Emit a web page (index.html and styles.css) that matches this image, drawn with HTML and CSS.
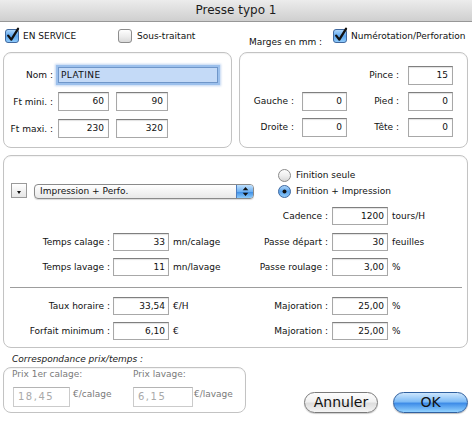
FILE: index.html
```html
<!DOCTYPE html>
<html lang="fr">
<head>
<meta charset="utf-8">
<title>Presse typo 1</title>
<link rel="stylesheet" href="styles.css">
</head>
<body>
<div class="window">
  <div class="titlebar">Presse typo 1</div>
  <div class="content">
    <div class="checks">
      <div class="check c1">
        <svg class="cb" width="15" height="15" viewBox="0 0 15 15"><defs><linearGradient id="gb1" x1="0" y1="0" x2="0" y2="1"><stop offset="0" stop-color="#b4dafc"/><stop offset=".5" stop-color="#5da6ee"/><stop offset="1" stop-color="#92cdfc"/></linearGradient></defs><rect x="0.5" y="1.5" width="13" height="13" rx="2.5" fill="url(#gb1)" stroke="#41699f"/><path d="M3.2 7.6 L6.3 11.6 L13 0.8" fill="none" stroke="#111" stroke-width="2.3" stroke-linecap="round" stroke-linejoin="round"/></svg>
        <span>EN SERVICE</span>
      </div>
      <div class="check c2">
        <svg class="cb" width="15" height="15" viewBox="0 0 15 15"><defs><linearGradient id="gw1" x1="0" y1="0" x2="0" y2="1"><stop offset="0" stop-color="#ffffff"/><stop offset=".55" stop-color="#ececec"/><stop offset="1" stop-color="#d8d8d8"/></linearGradient></defs><rect x="0.5" y="1.5" width="13" height="13" rx="2.5" fill="url(#gw1)" stroke="#8d8d8d"/></svg>
        <span>Sous-traitant</span>
      </div>
      <div class="check c3">
        <svg class="cb" width="15" height="15" viewBox="0 0 15 15"><defs><linearGradient id="gb2" x1="0" y1="0" x2="0" y2="1"><stop offset="0" stop-color="#b4dafc"/><stop offset=".5" stop-color="#5da6ee"/><stop offset="1" stop-color="#92cdfc"/></linearGradient></defs><rect x="0.5" y="1.5" width="13" height="13" rx="2.5" fill="url(#gb2)" stroke="#41699f"/><path d="M3.2 7.6 L6.3 11.6 L13 0.8" fill="none" stroke="#111" stroke-width="2.3" stroke-linecap="round" stroke-linejoin="round"/></svg>
        <span>Numérotation/Perforation</span>
      </div>
    </div>
    <div class="marges">Marges en mm :</div>

    <div class="top">
      <div class="box box-nom">
        <div class="row r1"><span class="lbl">Nom :</span><span class="field name">PLATINE</span></div>
        <div class="row r2"><span class="lbl">Ft mini. :</span><span class="field w51">60</span><span class="field w52">90</span></div>
        <div class="row r3"><span class="lbl">Ft maxi. :</span><span class="field w51">230</span><span class="field w52">320</span></div>
      </div>
      <div class="box box-marges">
        <span class="ml pince-l">Pince :</span><span class="field mf">15</span>
        <span class="ml">Gauche :</span><span class="field mf">0</span>
        <span class="ml">Pied :</span><span class="field mf">0</span>
        <span class="ml">Droite :</span><span class="field mf">0</span>
        <span class="ml">Tête :</span><span class="field mf">0</span>
      </div>
    </div>

    <div class="box box-main">
      <div class="mode">
        <div class="radio rad1">
          <svg width="13" height="13" viewBox="0 0 13 13"><defs><linearGradient id="rw" x1="0" y1="0" x2="0" y2="1"><stop offset="0" stop-color="#ffffff"/><stop offset=".55" stop-color="#ededed"/><stop offset="1" stop-color="#d5d5d5"/></linearGradient></defs><circle cx="6.5" cy="6.5" r="6" fill="url(#rw)" stroke="#8b8b8b"/></svg>
          <span>Finition seule</span>
        </div>
        <div class="selectors">
          <span class="mini"><span class="tri"></span></span>
          <span class="popup"><span class="popup-text">Impression + Perfo.</span><span class="stepper"><svg width="7" height="11" viewBox="0 0 7 11"><path d="M3.5 1 L6.3 4.3 L0.7 4.3 Z M3.5 10 L6.3 6.7 L0.7 6.7 Z" fill="#111"/></svg></span></span>
        </div>
        <div class="radio rad2">
          <svg width="13" height="13" viewBox="0 0 13 13"><defs><linearGradient id="rb" x1="0" y1="0" x2="0" y2="1"><stop offset="0" stop-color="#b6dbfc"/><stop offset=".5" stop-color="#5aa3ec"/><stop offset="1" stop-color="#95cffc"/></linearGradient></defs><circle cx="6.5" cy="6.5" r="6" fill="url(#rb)" stroke="#41699f"/><circle cx="6.5" cy="6.5" r="2" fill="#111"/></svg>
          <span>Finition + Impression</span>
        </div>
      </div>

      <div class="fields">
        <span class="l start4">Cadence :</span><span class="field f">1200</span><span class="u">tours/H</span>

        <span class="l">Temps calage :</span><span class="field f">33</span><span class="u">mn/calage</span>
        <span class="l">Passe départ :</span><span class="field f">30</span><span class="u">feuilles</span>

        <span class="l">Temps lavage :</span><span class="field f">11</span><span class="u">mn/lavage</span>
        <span class="l">Passe roulage :</span><span class="field f">3,00</span><span class="u">%</span>

        <span class="sep"></span>

        <span class="l">Taux horaire :</span><span class="field f">33,54</span><span class="u">€/H</span>
        <span class="l">Majoration :</span><span class="field f">25,00</span><span class="u">%</span>

        <span class="l">Forfait minimum :</span><span class="field f">6,10</span><span class="u">€</span>
        <span class="l">Majoration :</span><span class="field f">25,00</span><span class="u">%</span>
      </div>
    </div>

    <div class="bottom">
      <div class="corr">
        <div class="corr-title">Correspondance prix/temps :</div>
        <div class="box box-corr">
          <span class="cl">Prix 1er calage:</span>
          <span class="cl">Prix lavage:</span>
          <div class="grp g1"><span class="dis d1">18,45</span><span class="cu">€/calage</span></div>
          <div class="grp g2"><span class="dis d2">6,15</span><span class="cu">€/lavage</span></div>
        </div>
      </div>
      <div class="buttons">
        <span class="btn cancel">Annuler</span>
        <span class="btn ok">OK</span>
      </div>
    </div>
  </div>
</div>
</body>
</html>
```

FILE: styles.css
```css
* { box-sizing: border-box; margin: 0; padding: 0; }
html, body { width: 472px; height: 424px; overflow: hidden; }
body {
  background: #ffffff;
  font-family: "DejaVu Sans", "Noto Sans", sans-serif;
  font-size: 9px;
  color: #111;
}
span { white-space: nowrap; }

.titlebar {
  height: 22px;
  line-height: 21px;
  text-align: center;
  font-size: 12px;
  color: #1c1c1c;
  background: linear-gradient(#ececec, #cfcfcf);
  border-bottom: 1px solid #979797;
}

.content { padding: 0 4px 0 3px; }

/* top checkboxes */
.checks { display: flex; height: 15px; margin-top: 6px; }
.check { display: flex; align-items: center; gap: 3px; }
.check svg { overflow: visible; flex: none; }
.c1 { width: 115px; padding-left: 2px; }
.c2 { width: 215px; gap: 4px; }

.marges { margin-top: -6px; height: 11px; line-height: 11px; padding-left: 246px; }

/* boxes */
.box {
  border: 1px solid #c3c3c3;
  border-radius: 8px;
  background: #fff;
  box-shadow: inset 0 1px 1px rgba(0,0,0,0.05);
}
.top { display: flex; gap: 7px; margin-top: 4px; }

.field {
  display: block;
  height: 19px;
  border: 1px solid #a8a8a8;
  border-top-color: #7f7f7f;
  background: #fff;
  text-align: right;
  padding-right: 4px;
  line-height: 17px;
  box-shadow: inset 0 1px 1px rgba(0,0,0,0.12);
}

.box-nom { width: 229px; padding: 12px 0 9px 0; display: flex; flex-direction: column; }
.row { display: flex; align-items: center; }
.r1 { height: 20px; }
.r2 { height: 19px; margin-top: 7px; }
.r3 { height: 19px; margin-top: 8px; }
.lbl { width: 49px; text-align: right; margin-right: 5px; }
.name {
  width: 160px;
  height: 16px;
  line-height: 14px;
  text-align: left;
  padding-left: 2px;
  letter-spacing: 0.4px;
  background: #c4daf7;
  border-color: #6f96c9;
  box-shadow: 0 0 0 2px #9cc0ec, 0 0 2px 3px rgba(120,165,225,0.45);
}
.w51 { width: 51px; }
.w52 { width: 52px; margin-left: 7px; }

.box-marges {
  width: 229px;
  display: grid;
  grid-template-columns: 54px 53px 52px 54px;
  grid-template-rows: 20px 19px 19px;
  row-gap: 7px;
  padding: 12px 0 9px 0;
  align-items: center;
}
.box-marges .r2 { margin: 0; }
.ml { text-align: right; line-height: 19px; }
.pince-l { grid-column-start: 3; }
.mf { width: 45px; justify-self: end; }

/* main box */
.box-main { margin-top: 7px; padding-bottom: 7px; }
.mode {
  display: grid;
  grid-template-columns: 274px 1fr;
  grid-template-rows: 16px 16px;
  padding-top: 11px;
}
.rad1 { grid-column: 2; grid-row: 1; }
.rad2 { grid-column: 2; grid-row: 2; }
.selectors { grid-column: 1; grid-row: 2; display: flex; align-items: center; gap: 7px; padding-left: 7px; }
.radio { display: flex; align-items: center; gap: 5px; }
.radio svg { flex: none; }

.mini {
  width: 16px; height: 15px;
  border: 1px solid #9a9a9a;
  background: linear-gradient(#ffffff, #e6e6e6);
  display: flex; align-items: flex-end; justify-content: center;
  padding-bottom: 3px;
  margin-top: -1px;
}
.tri {
  width: 0; height: 0;
  border-left: 2.5px solid transparent;
  border-right: 2.5px solid transparent;
  border-top: 3px solid #111;
}
.popup {
  width: 220px; height: 15px;
  border: 1px solid #8a8a8a;
  border-radius: 4px;
  background: linear-gradient(#ffffff, #e9e9e9);
  display: flex; align-items: stretch; justify-content: space-between;
  padding-left: 5px;
  overflow: hidden;
  box-shadow: 0 1px 1px rgba(0,0,0,0.15);
}
.popup-text { line-height: 13px; }
.stepper {
  width: 17px;
  background: linear-gradient(#bfe0fd 0%, #6fb1f2 50%, #3f8fe6 55%, #8ccbfb 100%);
  border-left: 1px solid #4d7dbf;
  display: flex; align-items: center; justify-content: center;
}

.fields {
  display: grid;
  grid-template-columns: 106px 59px 61px 98px 60px 1fr;
  grid-template-rows: 26px 25px 18px 21px 25px 18px;
  align-items: start;
  margin-top: 8px;
}
.l { text-align: right; line-height: 18px; }
.start4 { grid-column-start: 4; }
.f { width: 56px; height: 18px; line-height: 16px; justify-self: end; padding-right: 3px; }
.u { line-height: 18px; padding-left: 4px; }
.sep { grid-column: 1 / -1; margin: 11px 5px 0 6px; border-top: 1px solid #9d9d9d; height: 1px; border-bottom: 0; }

/* bottom */
.bottom { display: flex; justify-content: space-between; align-items: flex-end; margin-top: 6px; }
.corr { width: 243px; }
.corr-title { font-style: italic; line-height: 11px; padding-left: 9px; margin-bottom: 2px; color: #222; }
.box-corr {
  display: grid;
  grid-template-columns: 121px 1fr;
  grid-template-rows: 11px 27px;
  padding: 1px 0 5px 8px;
}
.cl { line-height: 11px; color: #7a7a7a; }
.grp { display: flex; align-items: flex-start; margin-top: 7px; }
.dis {
  height: 20px;
  border: 1px solid #cbcbcb;
  border-top-color: #b4b4b4;
  color: #a9a9a9;
  font-size: 10px;
  letter-spacing: 1.5px;
  padding-left: 4px;
  line-height: 18px;
}
.d1 { width: 57px; margin-left: 1px; }
.d2 { width: 60px; }
.cu { color: #7a7a7a; line-height: 11px; margin-top: 2px; }
.g1 .cu { margin-left: 3px; }
.g2 .cu { margin-left: 1px; }

.buttons { display: flex; gap: 15px; }
.btn {
  display: block;
  height: 21px;
  border-radius: 11px;
  font-size: 14px;
  line-height: 19px;
  text-align: center;
  color: #111;
}
.cancel {
  width: 74px;
  border: 1px solid #7a7a7a;
  background: linear-gradient(#fdfdfd 0%, #f1f1f1 45%, #dedede 55%, #f4f4f4 100%);
  box-shadow: 0 1px 1px rgba(0,0,0,0.2);
}
.ok {
  width: 75px;
  border: 1px solid #30609f;
  background: linear-gradient(#cde6fd 0%, #7fbcf6 45%, #3f8de8 55%, #92d2ff 100%);
  box-shadow: 0 1px 1px rgba(0,0,0,0.25);
}
```
